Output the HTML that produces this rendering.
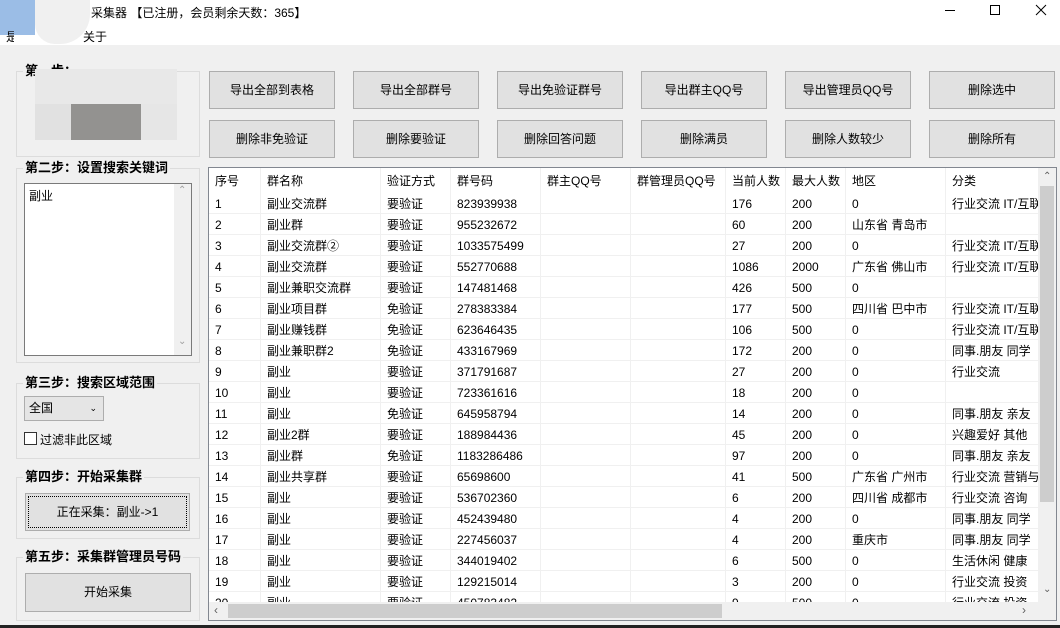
<!DOCTYPE html>
<html><head><meta charset="utf-8"><style>
*{box-sizing:border-box;margin:0;padding:0}
body{width:1060px;height:628px;overflow:hidden;background:#f0f0f0;font-family:"Liberation Sans","Noto Sans CJK SC",sans-serif;font-size:12px;color:#000;position:relative}
.a{position:absolute}
.btn{position:absolute;width:126px;height:38px;background:#e1e1e1;border:1px solid #adadad;text-align:center;line-height:36px;font-size:12px}
.gb{position:absolute;border:1px solid #dcdcdc}
.gt{position:absolute;background:#f0f0f0;font-weight:bold;font-size:13px;padding:0 2px;top:-9px;left:6px;line-height:16px}
.tbl{position:absolute;left:208px;top:167px;width:849px;height:454px;background:#fff;border:1px solid #828790;overflow:hidden}
.row{position:absolute;left:0;height:21px;width:830px;border-bottom:1px solid #f0f0f0}
.c{position:absolute;top:0;height:21px;line-height:22px;padding-left:6px;border-right:1px solid #f0f0f0;white-space:nowrap;overflow:hidden}
</style></head><body>
<div class="a" style="left:0;top:0;width:1060px;height:45px;background:#fff"></div>
<div class="a" style="left:0;top:0;width:35px;height:35px;background:#9bbde6"></div>
<div class="a" style="left:35px;top:0;width:55px;height:44px;background:#f0f0f0;border-radius:0 0 30px 20px"></div>
<div class="a" style="left:91px;top:4px;font-size:12px">采集器 【已注册，会员剩余天数：365】</div>
<div class="a" style="left:6px;top:28px;width:8px;overflow:hidden">是</div>
<div class="a" style="left:83px;top:28px">关于</div>
<div class="a" style="left:945px;top:10px;width:10px;height:1px;background:#000"></div>
<div class="a" style="left:990px;top:5px;width:10px;height:10px;border:1px solid #000"></div>
<svg class="a" style="left:1035px;top:4px" width="12" height="12"><path d="M1 1L11 11M11 1L1 11" stroke="#000" stroke-width="1"/></svg>

<div class="gb" style="left:16px;top:71px;width:184px;height:86px"><div class="gt">第一步：</div></div>
<div class="a" style="left:35px;top:69px;width:142px;height:35px;background:#e8e8e8"></div>
<div class="a" style="left:35px;top:104px;width:36px;height:36px;background:#e1e1e1"></div>
<div class="a" style="left:71px;top:104px;width:70px;height:36px;background:#939290"></div>
<div class="a" style="left:141px;top:104px;width:36px;height:36px;background:#e6e6e6"></div>

<div class="gb" style="left:16px;top:168px;width:184px;height:195px"><div class="gt">第二步：设置搜索关键词</div></div>
<div class="a" style="left:24px;top:183px;width:168px;height:173px;background:#fff;border:1px solid #7a7a7a"><div style="padding:3px 4px">副业</div><div class="a" style="right:0;top:0;width:17px;height:171px;background:#f0f0f0"><div class="a" style="left:4px;top:1px;font-size:10px;color:#a0a0a0">&#8963;</div><div class="a" style="left:4px;top:152px;font-size:10px;color:#a0a0a0">&#8964;</div></div></div>

<div class="gb" style="left:16px;top:383px;width:184px;height:76px"><div class="gt">第三步：搜索区域范围</div></div>
<div class="a" style="left:24px;top:396px;width:80px;height:25px;background:#e5e5e5;border:1px solid #adadad;line-height:23px;padding-left:4px">全国<span class="a" style="right:6px;top:0;font-size:9px">&#8964;</span></div>
<div class="a" style="left:24px;top:432px;width:13px;height:13px;background:#fff;border:1px solid #333"></div>
<div class="a" style="left:40px;top:431px">过滤非此区域</div>

<div class="gb" style="left:16px;top:477px;width:184px;height:62px"><div class="gt">第四步：开始采集群</div></div>
<div class="a" style="left:25px;top:493px;width:165px;height:38px;background:#e1e1e1;border:1px solid #adadad;text-align:center;line-height:36px"><div class="a" style="left:2px;top:2px;right:2px;bottom:2px;border:1px dotted #000"></div>正在采集：副业-&gt;1</div>

<div class="gb" style="left:16px;top:557px;width:184px;height:64px"><div class="gt">第五步：采集群管理员号码</div></div>
<div class="a" style="left:25px;top:573px;width:166px;height:39px;background:#e1e1e1;border:1px solid #adadad;text-align:center;line-height:37px">开始采集</div>

<div class="btn" style="left:209px;top:71px">导出全部到表格</div>
<div class="btn" style="left:353px;top:71px">导出全部群号</div>
<div class="btn" style="left:497px;top:71px">导出免验证群号</div>
<div class="btn" style="left:641px;top:71px">导出群主QQ号</div>
<div class="btn" style="left:785px;top:71px">导出管理员QQ号</div>
<div class="btn" style="left:929px;top:71px">删除选中</div>
<div class="btn" style="left:209px;top:120px">删除非免验证</div>
<div class="btn" style="left:353px;top:120px">删除要验证</div>
<div class="btn" style="left:497px;top:120px">删除回答问题</div>
<div class="btn" style="left:641px;top:120px">删除满员</div>
<div class="btn" style="left:785px;top:120px">删除人数较少</div>
<div class="btn" style="left:929px;top:120px">删除所有</div>

<div class="tbl">
<div class="row" style="top:0;height:25px;border-bottom:none"><div class="c" style="left:0;width:52px;height:25px;line-height:26px">序号</div><div class="c" style="left:52px;width:120px;height:25px;line-height:26px">群名称</div><div class="c" style="left:172px;width:70px;height:25px;line-height:26px">验证方式</div><div class="c" style="left:242px;width:90px;height:25px;line-height:26px">群号码</div><div class="c" style="left:332px;width:90px;height:25px;line-height:26px">群主QQ号</div><div class="c" style="left:422px;width:95px;height:25px;line-height:26px">群管理员QQ号</div><div class="c" style="left:517px;width:60px;height:25px;line-height:26px">当前人数</div><div class="c" style="left:577px;width:60px;height:25px;line-height:26px">最大人数</div><div class="c" style="left:637px;width:100px;height:25px;line-height:26px">地区</div><div class="c" style="left:737px;width:93px;height:25px;line-height:26px;border:none">分类</div></div>
<div class="row" style="top:25px"><div class="c" style="left:0;width:52px">1</div><div class="c" style="left:52px;width:120px">副业交流群</div><div class="c" style="left:172px;width:70px">要验证</div><div class="c" style="left:242px;width:90px">823939938</div><div class="c" style="left:332px;width:90px"></div><div class="c" style="left:422px;width:95px"></div><div class="c" style="left:517px;width:60px">176</div><div class="c" style="left:577px;width:60px">200</div><div class="c" style="left:637px;width:100px">0</div><div class="c" style="left:737px;width:93px;border:none">行业交流 IT/互联</div></div>
<div class="row" style="top:46px"><div class="c" style="left:0;width:52px">2</div><div class="c" style="left:52px;width:120px">副业群</div><div class="c" style="left:172px;width:70px">要验证</div><div class="c" style="left:242px;width:90px">955232672</div><div class="c" style="left:332px;width:90px"></div><div class="c" style="left:422px;width:95px"></div><div class="c" style="left:517px;width:60px">60</div><div class="c" style="left:577px;width:60px">200</div><div class="c" style="left:637px;width:100px">山东省 青岛市</div><div class="c" style="left:737px;width:93px;border:none"></div></div>
<div class="row" style="top:67px"><div class="c" style="left:0;width:52px">3</div><div class="c" style="left:52px;width:120px">副业交流群②</div><div class="c" style="left:172px;width:70px">要验证</div><div class="c" style="left:242px;width:90px">1033575499</div><div class="c" style="left:332px;width:90px"></div><div class="c" style="left:422px;width:95px"></div><div class="c" style="left:517px;width:60px">27</div><div class="c" style="left:577px;width:60px">200</div><div class="c" style="left:637px;width:100px">0</div><div class="c" style="left:737px;width:93px;border:none">行业交流 IT/互联</div></div>
<div class="row" style="top:88px"><div class="c" style="left:0;width:52px">4</div><div class="c" style="left:52px;width:120px">副业交流群</div><div class="c" style="left:172px;width:70px">要验证</div><div class="c" style="left:242px;width:90px">552770688</div><div class="c" style="left:332px;width:90px"></div><div class="c" style="left:422px;width:95px"></div><div class="c" style="left:517px;width:60px">1086</div><div class="c" style="left:577px;width:60px">2000</div><div class="c" style="left:637px;width:100px">广东省 佛山市</div><div class="c" style="left:737px;width:93px;border:none">行业交流 IT/互联</div></div>
<div class="row" style="top:109px"><div class="c" style="left:0;width:52px">5</div><div class="c" style="left:52px;width:120px">副业兼职交流群</div><div class="c" style="left:172px;width:70px">要验证</div><div class="c" style="left:242px;width:90px">147481468</div><div class="c" style="left:332px;width:90px"></div><div class="c" style="left:422px;width:95px"></div><div class="c" style="left:517px;width:60px">426</div><div class="c" style="left:577px;width:60px">500</div><div class="c" style="left:637px;width:100px">0</div><div class="c" style="left:737px;width:93px;border:none"></div></div>
<div class="row" style="top:130px"><div class="c" style="left:0;width:52px">6</div><div class="c" style="left:52px;width:120px">副业项目群</div><div class="c" style="left:172px;width:70px">免验证</div><div class="c" style="left:242px;width:90px">278383384</div><div class="c" style="left:332px;width:90px"></div><div class="c" style="left:422px;width:95px"></div><div class="c" style="left:517px;width:60px">177</div><div class="c" style="left:577px;width:60px">500</div><div class="c" style="left:637px;width:100px">四川省 巴中市</div><div class="c" style="left:737px;width:93px;border:none">行业交流 IT/互联</div></div>
<div class="row" style="top:151px"><div class="c" style="left:0;width:52px">7</div><div class="c" style="left:52px;width:120px">副业赚钱群</div><div class="c" style="left:172px;width:70px">免验证</div><div class="c" style="left:242px;width:90px">623646435</div><div class="c" style="left:332px;width:90px"></div><div class="c" style="left:422px;width:95px"></div><div class="c" style="left:517px;width:60px">106</div><div class="c" style="left:577px;width:60px">500</div><div class="c" style="left:637px;width:100px">0</div><div class="c" style="left:737px;width:93px;border:none">行业交流 IT/互联</div></div>
<div class="row" style="top:172px"><div class="c" style="left:0;width:52px">8</div><div class="c" style="left:52px;width:120px">副业兼职群2</div><div class="c" style="left:172px;width:70px">免验证</div><div class="c" style="left:242px;width:90px">433167969</div><div class="c" style="left:332px;width:90px"></div><div class="c" style="left:422px;width:95px"></div><div class="c" style="left:517px;width:60px">172</div><div class="c" style="left:577px;width:60px">200</div><div class="c" style="left:637px;width:100px">0</div><div class="c" style="left:737px;width:93px;border:none">同事.朋友 同学</div></div>
<div class="row" style="top:193px"><div class="c" style="left:0;width:52px">9</div><div class="c" style="left:52px;width:120px">副业</div><div class="c" style="left:172px;width:70px">要验证</div><div class="c" style="left:242px;width:90px">371791687</div><div class="c" style="left:332px;width:90px"></div><div class="c" style="left:422px;width:95px"></div><div class="c" style="left:517px;width:60px">27</div><div class="c" style="left:577px;width:60px">200</div><div class="c" style="left:637px;width:100px">0</div><div class="c" style="left:737px;width:93px;border:none">行业交流</div></div>
<div class="row" style="top:214px"><div class="c" style="left:0;width:52px">10</div><div class="c" style="left:52px;width:120px">副业</div><div class="c" style="left:172px;width:70px">要验证</div><div class="c" style="left:242px;width:90px">723361616</div><div class="c" style="left:332px;width:90px"></div><div class="c" style="left:422px;width:95px"></div><div class="c" style="left:517px;width:60px">18</div><div class="c" style="left:577px;width:60px">200</div><div class="c" style="left:637px;width:100px">0</div><div class="c" style="left:737px;width:93px;border:none"></div></div>
<div class="row" style="top:235px"><div class="c" style="left:0;width:52px">11</div><div class="c" style="left:52px;width:120px">副业</div><div class="c" style="left:172px;width:70px">免验证</div><div class="c" style="left:242px;width:90px">645958794</div><div class="c" style="left:332px;width:90px"></div><div class="c" style="left:422px;width:95px"></div><div class="c" style="left:517px;width:60px">14</div><div class="c" style="left:577px;width:60px">200</div><div class="c" style="left:637px;width:100px">0</div><div class="c" style="left:737px;width:93px;border:none">同事.朋友 亲友</div></div>
<div class="row" style="top:256px"><div class="c" style="left:0;width:52px">12</div><div class="c" style="left:52px;width:120px">副业2群</div><div class="c" style="left:172px;width:70px">要验证</div><div class="c" style="left:242px;width:90px">188984436</div><div class="c" style="left:332px;width:90px"></div><div class="c" style="left:422px;width:95px"></div><div class="c" style="left:517px;width:60px">45</div><div class="c" style="left:577px;width:60px">200</div><div class="c" style="left:637px;width:100px">0</div><div class="c" style="left:737px;width:93px;border:none">兴趣爱好 其他</div></div>
<div class="row" style="top:277px"><div class="c" style="left:0;width:52px">13</div><div class="c" style="left:52px;width:120px">副业群</div><div class="c" style="left:172px;width:70px">免验证</div><div class="c" style="left:242px;width:90px">1183286486</div><div class="c" style="left:332px;width:90px"></div><div class="c" style="left:422px;width:95px"></div><div class="c" style="left:517px;width:60px">97</div><div class="c" style="left:577px;width:60px">200</div><div class="c" style="left:637px;width:100px">0</div><div class="c" style="left:737px;width:93px;border:none">同事.朋友 亲友</div></div>
<div class="row" style="top:298px"><div class="c" style="left:0;width:52px">14</div><div class="c" style="left:52px;width:120px">副业共享群</div><div class="c" style="left:172px;width:70px">要验证</div><div class="c" style="left:242px;width:90px">65698600</div><div class="c" style="left:332px;width:90px"></div><div class="c" style="left:422px;width:95px"></div><div class="c" style="left:517px;width:60px">41</div><div class="c" style="left:577px;width:60px">500</div><div class="c" style="left:637px;width:100px">广东省 广州市</div><div class="c" style="left:737px;width:93px;border:none">行业交流 营销与</div></div>
<div class="row" style="top:319px"><div class="c" style="left:0;width:52px">15</div><div class="c" style="left:52px;width:120px">副业</div><div class="c" style="left:172px;width:70px">要验证</div><div class="c" style="left:242px;width:90px">536702360</div><div class="c" style="left:332px;width:90px"></div><div class="c" style="left:422px;width:95px"></div><div class="c" style="left:517px;width:60px">6</div><div class="c" style="left:577px;width:60px">200</div><div class="c" style="left:637px;width:100px">四川省 成都市</div><div class="c" style="left:737px;width:93px;border:none">行业交流 咨询</div></div>
<div class="row" style="top:340px"><div class="c" style="left:0;width:52px">16</div><div class="c" style="left:52px;width:120px">副业</div><div class="c" style="left:172px;width:70px">要验证</div><div class="c" style="left:242px;width:90px">452439480</div><div class="c" style="left:332px;width:90px"></div><div class="c" style="left:422px;width:95px"></div><div class="c" style="left:517px;width:60px">4</div><div class="c" style="left:577px;width:60px">200</div><div class="c" style="left:637px;width:100px">0</div><div class="c" style="left:737px;width:93px;border:none">同事.朋友 同学</div></div>
<div class="row" style="top:361px"><div class="c" style="left:0;width:52px">17</div><div class="c" style="left:52px;width:120px">副业</div><div class="c" style="left:172px;width:70px">要验证</div><div class="c" style="left:242px;width:90px">227456037</div><div class="c" style="left:332px;width:90px"></div><div class="c" style="left:422px;width:95px"></div><div class="c" style="left:517px;width:60px">4</div><div class="c" style="left:577px;width:60px">200</div><div class="c" style="left:637px;width:100px">重庆市</div><div class="c" style="left:737px;width:93px;border:none">同事.朋友 同学</div></div>
<div class="row" style="top:382px"><div class="c" style="left:0;width:52px">18</div><div class="c" style="left:52px;width:120px">副业</div><div class="c" style="left:172px;width:70px">要验证</div><div class="c" style="left:242px;width:90px">344019402</div><div class="c" style="left:332px;width:90px"></div><div class="c" style="left:422px;width:95px"></div><div class="c" style="left:517px;width:60px">6</div><div class="c" style="left:577px;width:60px">500</div><div class="c" style="left:637px;width:100px">0</div><div class="c" style="left:737px;width:93px;border:none">生活休闲 健康</div></div>
<div class="row" style="top:403px"><div class="c" style="left:0;width:52px">19</div><div class="c" style="left:52px;width:120px">副业</div><div class="c" style="left:172px;width:70px">要验证</div><div class="c" style="left:242px;width:90px">129215014</div><div class="c" style="left:332px;width:90px"></div><div class="c" style="left:422px;width:95px"></div><div class="c" style="left:517px;width:60px">3</div><div class="c" style="left:577px;width:60px">200</div><div class="c" style="left:637px;width:100px">0</div><div class="c" style="left:737px;width:93px;border:none">行业交流 投资</div></div>
<div class="row" style="top:424px"><div class="c" style="left:0;width:52px">20</div><div class="c" style="left:52px;width:120px">副业</div><div class="c" style="left:172px;width:70px">要验证</div><div class="c" style="left:242px;width:90px">450783482</div><div class="c" style="left:332px;width:90px"></div><div class="c" style="left:422px;width:95px"></div><div class="c" style="left:517px;width:60px">9</div><div class="c" style="left:577px;width:60px">500</div><div class="c" style="left:637px;width:100px">0</div><div class="c" style="left:737px;width:93px;border:none">行业交流 投资</div></div>
<div class="a" style="left:829px;top:0;width:18px;height:434px;background:#f0f0f0"><div class="a" style="left:2px;top:18px;width:14px;height:316px;background:#cdcdcd"></div><div class="a" style="left:5px;top:3px;font-size:10px;color:#606060">&#8963;</div><div class="a" style="left:5px;top:416px;font-size:10px;color:#606060">&#8964;</div></div>
<div class="a" style="left:0;top:434px;width:847px;height:18px;background:#f0f0f0"><div class="a" style="left:19px;top:2px;width:494px;height:14px;background:#cdcdcd"></div><div class="a" style="left:5px;top:1px;font-size:12px;color:#606060">&lsaquo;</div><div class="a" style="left:813px;top:1px;font-size:12px;color:#606060">&rsaquo;</div></div>
</div>
<div class="a" style="left:0;top:625px;width:1060px;height:3px;background:#222"></div>
</body></html>
